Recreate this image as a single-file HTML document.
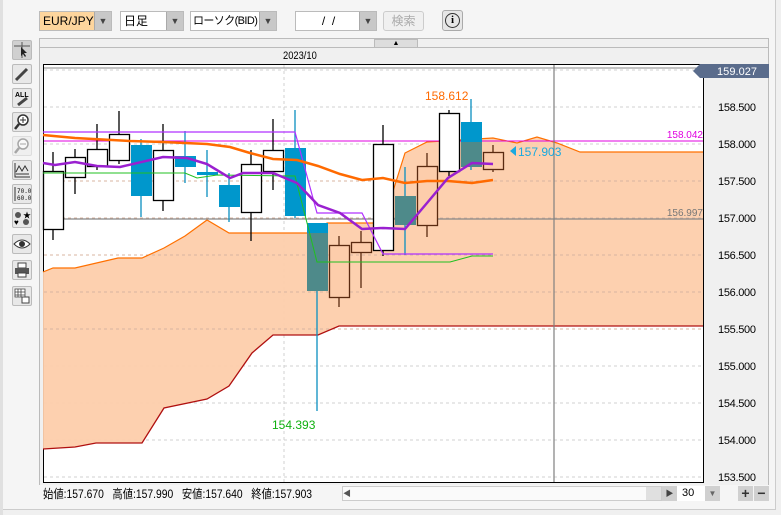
<!DOCTYPE html>
<html><head><meta charset="utf-8"><style>
body{margin:0;width:781px;height:515px;background:#f0f0f0;font-family:"Liberation Sans","Noto Sans CJK JP",sans-serif;overflow:hidden;position:relative}
.abs{position:absolute}
.sel{position:absolute;top:11px;height:20px;background:#fff;border:1px solid #bbb;box-sizing:border-box;font-size:12px;line-height:18px;padding-left:3px;white-space:nowrap;overflow:hidden}
.arr{position:absolute;right:0;top:0;width:16px;height:18px;background:#c8c8c8;border-left:1px solid #aaa;font-size:9px;text-align:center;line-height:18px;color:#444}
.tb{position:absolute;left:12px;width:20px;height:20px;border:1px solid #bbb;background:#e8e8e8;box-sizing:border-box;border-radius:2px}
</style></head><body>
<div class="abs" style="left:0;top:0;width:775px;height:509px;border-right:1px solid #ccc;border-bottom:1px solid #ccc;background:#f5f5f5"></div>
<div class="abs" style="left:0;top:0;width:3px;height:515px;background:#e0e0e0"></div>
<div class="sel" style="left:39px;width:73px;background:#fdd59d;border-color:#bbb">EUR/JPY<div class="arr">▼</div></div>
<div class="sel" style="left:120px;width:64px">日足<div class="arr">▼</div></div>
<div class="sel" style="left:190px;width:87px;font-size:11px;letter-spacing:-0.6px;padding-left:2px">ローソク(BID)<div class="arr" style="letter-spacing:0">▼</div></div>
<div class="sel" style="left:295px;width:82px;text-align:center;padding-right:18px">/&nbsp;&nbsp;/<div class="arr">▼</div></div>
<div class="abs" style="left:383px;top:11px;width:41px;height:20px;border:1px solid #ccc;border-radius:3px;background:#f0f0f0;color:#aaa;font-size:12px;text-align:center;line-height:19px;box-sizing:border-box">検索</div>
<div class="abs" style="left:442px;top:10px;width:21px;height:21px;border:1px solid #aaa;border-radius:3px;background:#e6e6e6;box-sizing:border-box"><div style="margin:2px;width:15px;height:15px;border:1.5px solid #333;border-radius:50%;box-sizing:border-box;font:bold 11px 'Liberation Serif',serif;text-align:center;line-height:13px">i</div></div>
<!-- chart panel -->
<div class="abs" style="left:39px;top:38px;width:730px;height:10px;background:#f0f0f0;border:1px solid #bbb;box-sizing:border-box"></div>
<div class="abs" style="left:374px;top:39px;width:44px;height:9px;background:#ddd;border:1px solid #bbb;box-sizing:border-box;font-size:7px;text-align:center;line-height:8px">▲</div>
<div class="abs" style="left:39px;top:48px;width:730px;height:437px;background:#f0f0f0;border-left:1px solid #bbb;border-right:1px solid #bbb;box-sizing:border-box"></div>
<div class="abs" style="left:283px;top:50px;font:11px 'Liberation Sans',sans-serif;transform:scaleX(0.85);transform-origin:left">2023/10</div>
<!-- toolbar -->
<div class="tb" style="top:40px;background:#d0d0d0">
<svg width="18" height="18"><path d="M9 1V17M1 5H17" stroke="#555"/><path d="M8 6L8 15L10 13L12 16L13 15L11 12L14 12Z" fill="#222"/></svg></div>
<div class="tb" style="top:64px"><svg width="18" height="18"><path d="M3 15L14 4" stroke="#444" stroke-width="3"/></svg></div>
<div class="tb" style="top:88px"><svg width="18" height="18"><text x="2" y="8" font-size="7" font-family="Liberation Sans" font-weight="bold">ALL</text><path d="M5 16L14 9" stroke="#444" stroke-width="3"/></svg></div>
<div class="tb" style="top:112px"><svg width="18" height="18"><circle cx="10" cy="7" r="5" fill="#fff" stroke="#333" stroke-width="1.5"/><path d="M7 7H13M10 4V10" stroke="#333"/><path d="M6 11L2 16" stroke="#333" stroke-width="2.5"/></svg></div>
<div class="tb" style="top:136px;opacity:.4"><svg width="18" height="18"><circle cx="10" cy="7" r="5" fill="#fff" stroke="#333" stroke-width="1.5"/><path d="M7 7H13" stroke="#333"/><path d="M6 11L2 16" stroke="#333" stroke-width="2.5"/></svg></div>
<div class="tb" style="top:160px"><svg width="18" height="18"><path d="M2 2V16H17" stroke="#333" fill="none"/><path d="M3 11L6 5L9 10L12 5L15 10M3 13H16" stroke="#333" fill="none"/></svg></div>
<div class="tb" style="top:184px"><svg width="18" height="18"><text x="4" y="8" font-size="6" font-family="Liberation Mono">70.0</text><text x="4" y="15" font-size="6" font-family="Liberation Mono">60.0</text><path d="M2 2V16" stroke="#333"/></svg></div>
<div class="tb" style="top:208px"><svg width="18" height="18"><circle cx="5" cy="6" r="3" fill="#555"/><text x="10" y="9" font-size="8">★</text><text x="1" y="16" font-size="8">♥</text><circle cx="13" cy="13" r="3" fill="#555"/></svg></div>
<div class="tb" style="top:234px"><svg width="18" height="18"><path d="M1 9Q9 1 17 9Q9 17 1 9Z" fill="#fff" stroke="#333"/><circle cx="9" cy="9" r="3" fill="#333"/></svg></div>
<div class="tb" style="top:260px"><svg width="18" height="18"><rect x="5" y="2" width="8" height="5" fill="#fff" stroke="#444"/><rect x="2" y="7" width="14" height="6" fill="#555"/><rect x="5" y="12" width="8" height="4" fill="#fff" stroke="#444"/></svg></div>
<div class="tb" style="top:286px"><svg width="18" height="18"><path d="M2 2H12V10H2ZM2 5H12M2 8H12M5 2V10M8 2V10" stroke="#444" fill="#fff" stroke-width=".8"/><rect x="9" y="10" width="7" height="6" fill="#fff" stroke="#444"/></svg></div>
<!-- chart -->
<svg class="abs" style="left:0;top:0" width="781" height="515">
<rect x="43.5" y="64.5" width="660" height="418" fill="#fff" stroke="#000"/>
<g stroke="#d0d0d0" stroke-dasharray="3,3">
<path d="M44 70H703M44 107H703M44 144H703M44 181H703M44 218H703M44 255H703M44 292H703M44 329H703M44 366H703M44 403H703M44 440H703M44 477H703M284 65V482"/></g>
<path d="M43 272L53 268L75 268L118 258L142 258L164 248L185 236L207 220L229 233L318 233L327 223L383 223L405 153L427 142L493 138L517 143L537 137L557 143L580 152L703 152L703 326L339 326L318 335L273 335L252 353L229 386L207 399L164 408L142 443L96 443L75 447L43 449Z" fill="#fdcdab" fill-opacity=".95"/>
<g stroke="#d8b4a0" stroke-dasharray="3,3" stroke-width="1"><path d="M44 255H703M44 292H703M44 329H703M44 181H703M44 218H703"/></g>
<path d="M43 272L53 268L75 268L118 258L142 258L164 248L185 236L207 220L229 233L318 233L327 223L383 223L405 153L427 142L493 138L517 143L537 137L557 143L580 152L703 152" fill="none" stroke="#ff7000" stroke-width="1.2"/>
<path d="M703 326L339 326L318 335L273 335L252 353L229 386L207 399L164 408L142 443L96 443L75 447L43 449" fill="none" stroke="#b01010" stroke-width="1.3"/>
<path d="M44 219H703" stroke="#888" stroke-width="1.2"/>
<path d="M44 141H703" stroke="#e000e0" stroke-width="1"/>
<path d="M44 68H703" stroke="#888" stroke-width="1"/>
<path d="M554 65V482" stroke="#808080" stroke-width="1.2"/>
<g stroke-width="1.3">
<g stroke="#000" fill="#fff">
<path d="M53 152V240M75 149V194M97 124V170M119 111V164M163 124V211M251 150V241M273 119V190M383 125V256M449 110V176"/>
<rect x="43.5" y="171.5" width="20" height="58"/><rect x="65.5" y="157.5" width="20" height="20"/><rect x="87.5" y="149.5" width="20" height="17"/><rect x="109.5" y="134.5" width="20" height="26"/><rect x="153.5" y="150.5" width="20" height="50"/><rect x="241.5" y="164.5" width="20" height="48"/><rect x="263.5" y="150.5" width="20" height="21"/><rect x="373.5" y="144.5" width="20" height="106"/><rect x="439.5" y="113.5" width="20" height="58"/>
</g>
<g stroke="#0a8fbf" fill="none"><path d="M141 139V217M185 131V183M207 150V197M229 173V222M295 110V218M317 223V411M405 167V255M471 99V170"/></g>
<g stroke="#5a2a10" fill="#fdcdab"><path d="M339 236V307M361 231V288M427 153V237M493 145V172"/>
<rect x="329.5" y="245.5" width="20" height="52"/><rect x="351.5" y="242.5" width="20" height="10"/><rect x="417.5" y="166.5" width="20" height="59"/><rect x="483.5" y="152.5" width="20" height="17"/></g>
</g>
<g fill="#0097cc"><rect x="131" y="145" width="21" height="51"/><rect x="175" y="156" width="21" height="11"/><rect x="197" y="172" width="21" height="3"/><rect x="219" y="185" width="21" height="22"/><rect x="285" y="148" width="21" height="68"/><rect x="307" y="223" width="21" height="10"/><rect x="461" y="122" width="21" height="20"/></g>
<g fill="#4e8a8a"><rect x="307" y="233" width="21" height="58"/><rect x="395" y="196" width="21" height="29"/><rect x="461" y="142" width="21" height="25"/></g>
<path d="M43 173L185 173L197 178L217 175L295 176L317 262L450 262L472 256L493 256" fill="none" stroke="#20c020" stroke-width="1"/>
<path d="M43 132L295 132L317 213L362 213L383 254L493 254" fill="none" stroke="#b030ff" stroke-width="1.2"/>
<path d="M43 135L75 138L130 141L163 142L207 144L230 147L250 153L273 159L297 160L318 166L340 174L362 180L383 178L405 183L427 181L448 181L472 183L493 180" fill="none" stroke="#ff6a00" stroke-width="2.5"/>
<path d="M43 163L55 165L75 162L97 166L120 167L163 157L187 158L207 164L230 178L243 173L273 173L297 183L318 205L340 213L362 229L383 228L405 229L427 203L448 178L472 163L493 164" fill="none" stroke="#9a20d0" stroke-width="2.5"/>
<g font-family="Liberation Sans,sans-serif">
<text x="425" y="100" font-size="12" fill="#ff6a00">158.612</text>
<text x="272" y="429" font-size="12" fill="#10b010">154.393</text>
<path d="M510 151L516 146V156Z" fill="#19a9e0"/>
<text x="518" y="156" font-size="12" fill="#19a9e0">157.903</text>
<text x="703" y="138" font-size="10" fill="#e000e0" text-anchor="end">158.042</text>
<text x="703" y="216" font-size="10" fill="#777" text-anchor="end">156.997</text>
<path d="M693 71L700 64H769V78H700Z" fill="#5a6c8c"/>
<text x="717" y="75" font-size="11" fill="#fff" textLength="40">159.027</text>
<g font-size="11" fill="#000">
<text x="718" y="111" textLength="38">158.500</text><text x="718" y="148" textLength="38">158.000</text><text x="718" y="185" textLength="38">157.500</text><text x="718" y="222" textLength="38">157.000</text><text x="718" y="259" textLength="38">156.500</text><text x="718" y="296" textLength="38">156.000</text><text x="718" y="333" textLength="38">155.500</text><text x="718" y="370" textLength="38">155.000</text><text x="718" y="407" textLength="38">154.500</text><text x="718" y="444" textLength="38">154.000</text><text x="718" y="481" textLength="38">153.500</text>
</g></g>
</svg>
<!-- bottom bar -->
<div class="abs" style="left:43px;top:487px;font-size:12px;line-height:14px;transform:scaleX(.86);transform-origin:left;white-space:nowrap">始値:157.670&nbsp;&nbsp;&nbsp;高値:157.990&nbsp;&nbsp;&nbsp;安値:157.640&nbsp;&nbsp;&nbsp;終値:157.903</div>
<div class="abs" style="left:342px;top:486px;width:320px;height:15px;background:#fafafa;border:1px solid #ccc;box-sizing:border-box"></div>
<div class="abs" style="left:343px;top:487px;width:12px;height:13px;font-size:8px;line-height:13px;color:#555">◀</div>
<div class="abs" style="left:646px;top:487px;width:15px;height:13px;background:#e0e0e0"></div>
<div class="abs" style="left:662px;top:486px;width:15px;height:15px;background:#d0d0d0;font-size:8px;line-height:15px;text-align:center;color:#444">▶</div>
<div class="abs" style="left:677px;top:486px;width:28px;height:15px;background:#fff;font-size:11px;line-height:15px;padding-left:5px;box-sizing:border-box">30</div>
<div class="abs" style="left:705px;top:486px;width:15px;height:15px;background:#d0d0d0;font-size:8px;line-height:15px;text-align:center;color:#666">▼</div>
<div class="abs" style="left:738px;top:486px;width:15px;height:15px;background:#d0d0d0;font:bold 14px/15px 'Liberation Sans';text-align:center;color:#333">+</div>
<div class="abs" style="left:754px;top:486px;width:15px;height:15px;background:#d0d0d0;font:bold 14px/14px 'Liberation Sans';text-align:center;color:#333">−</div>
</body></html>
